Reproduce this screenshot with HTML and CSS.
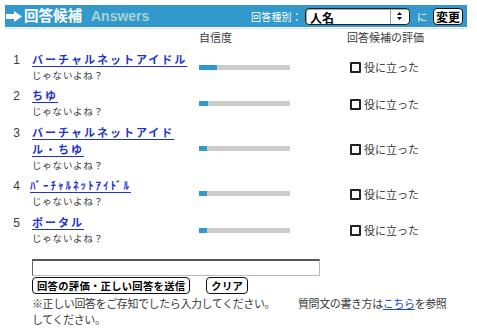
FILE: index.html
```html
<!DOCTYPE html>
<html lang="ja">
<head>
  <meta charset="UTF-8">
  <link rel="stylesheet" href="styles.css">
</head>
<body>
  <div class="titlebar">
    <svg class="arrow" width="16" height="11" viewBox="0 0 16 11">
      <path d="M0 3h8V0l8 5.5L8 11V8H0z" fill="#fff"/>
    </svg>
    <span class="title">回答候補</span>
    <span class="title-en">Answers</span>
    <form class="kind">
      <label for="kind">回答種別：</label>
      <span class="select-wrap">
        <select id="kind"><option>人名</option><option>地名</option></select>
        <span class="select-arrows">
          <svg width="5" height="8" viewBox="0 0 5 8"><path d="M2.5 0L5 3H0zM2.5 8L0 5h5z" fill="#000"/></svg>
        </span>
      </span>
      <span class="ni">に</span>
      <button type="button" class="btn btn-change">変更</button>
    </form>
  </div>
  <div class="rule"></div>

  <table class="answers">
    <colgroup>
      <col class="col-num">
      <col class="col-ans">
      <col class="col-conf">
      <col>
    </colgroup>
    <thead>
      <tr><th></th><th></th><th>自信度</th><th>回答候補の評価</th></tr>
    </thead>
    <tbody>
      <tr>
        <td class="num">1</td>
        <td><div class="name"><a href="#">バーチャルネットアイドル</a></div><div class="sub">じゃないよね？</div></td>
        <td><div class="bar"><div class="fill" style="width:18px"></div></div></td>
        <td class="eval"><label><input type="checkbox" class="useful">役に立った</label></td>
      </tr>
      <tr>
        <td class="num">2</td>
        <td><div class="name"><a href="#">ちゆ</a></div><div class="sub">じゃないよね？</div></td>
        <td><div class="bar"><div class="fill" style="width:9px"></div></div></td>
        <td class="eval"><label><input type="checkbox" class="useful">役に立った</label></td>
      </tr>
      <tr>
        <td class="num">3</td>
        <td><div class="name"><a href="#">バーチャルネットアイドル・ちゆ</a></div><div class="sub">じゃないよね？</div></td>
        <td><div class="bar"><div class="fill" style="width:8px"></div></div></td>
        <td class="eval"><label><input type="checkbox" class="useful">役に立った</label></td>
      </tr>
      <tr>
        <td class="num">4</td>
        <td><div class="name name-half"><a href="#">ﾊﾞｰﾁｬﾙﾈｯﾄｱｲﾄﾞﾙ</a></div><div class="sub">じゃないよね？</div></td>
        <td><div class="bar"><div class="fill" style="width:8px"></div></div></td>
        <td class="eval"><label><input type="checkbox" class="useful">役に立った</label></td>
      </tr>
      <tr>
        <td class="num">5</td>
        <td><div class="name"><a href="#">ポータル</a></div><div class="sub">じゃないよね？</div></td>
        <td><div class="bar"><div class="fill" style="width:8px"></div></div></td>
        <td class="eval"><label><input type="checkbox" class="useful">役に立った</label></td>
      </tr>
    </tbody>
  </table>

  <form class="reply">
    <input type="text" class="reply-input">
    <div class="reply-buttons">
      <button type="button" class="btn">回答の評価・正しい回答を送信</button>
      <button type="button" class="btn">クリア</button>
    </div>
    <div class="notes">
      <p class="note-left">※正しい回答をご存知でしたら入力してください。<br>してください。</p>
      <p class="note-right">質問文の書き方は<a href="#">こちら</a>を参照</p>
    </div>
  </form>
</body>
</html>
```

FILE: styles.css
```css
body {
  margin: 5px 10px 0 5px;
  font-family: "Liberation Sans", "Noto Sans CJK JP", sans-serif;
  font-size: 11px;
  color: #3a3a3a;
  background: #fff;
}

/* title bar */

.titlebar {
  display: flex;
  align-items: center;
  height: 22px;
  background: #3399cc;
  color: #fff;
}

.arrow {
  margin: 0 2px 0 1px;
}

.title {
  font-size: 14.5px;
  font-weight: bold;
  line-height: 22px;
}

.title-en {
  margin-left: 9px;
  font-size: 14px;
  font-weight: bold;
  color: #a3d4d0;
}

.kind {
  display: flex;
  align-items: center;
  margin: 0 4px 0 auto;
}

.kind label {
  font-size: 10px;
  letter-spacing: 0.2px;
  margin-right: 3px;
}

.select-wrap {
  display: inline-flex;
  width: 105px;
  height: 17px;
  box-sizing: border-box;
  border: 1px solid #222;
  border-radius: 4px;
  background: #fff;
  box-shadow: inset 1px 1px 0 #aaa;
  overflow: hidden;
}

.select-wrap select {
  -webkit-appearance: none;
  appearance: none;
  flex: 1;
  min-width: 0;
  height: 15px;
  border: 0;
  padding: 0 0 0 4px;
  background: transparent;
  color: #000;
  font: bold 12px "Noto Sans CJK JP", sans-serif;
  outline: none;
}

.select-arrows {
  display: flex;
  align-items: center;
  justify-content: center;
  width: 18px;
  border-left: 1px solid #999;
}

.ni {
  margin: 0 6px 0 7px;
  font-size: 10px;
}

.btn {
  background: #fff;
  border: 1px solid #111;
  border-radius: 4px;
  color: #000;
  font-family: "Noto Sans CJK JP", sans-serif;
  font-weight: bold;
  padding: 0 4px;
}

.btn-change {
  height: 17px;
  font-size: 12px;
  line-height: 15px;
  padding: 0 2px;
}

.rule {
  height: 1px;
  margin-top: 1px;
  background: #e2e2e2;
}

/* answers */

.answers {
  width: 462px;
  table-layout: fixed;
  border-collapse: collapse;
}

.col-num {
  width: 27px;
}

.col-ans {
  width: 167px;
}

.col-conf {
  width: 148px;
}

.answers th {
  padding: 1px 0 3px;
  font-size: 11px;
  font-weight: normal;
  line-height: 16px;
  text-align: left;
}

.answers td {
  padding: 2.75px 0;
  vertical-align: middle;
}

.answers td.num {
  vertical-align: top;
  text-align: right;
  padding-right: 12px;
  font-size: 12px;
  line-height: 17px;
}

.name {
  line-height: 17px;
}

.name a {
  color: #2233cc;
  font-size: 11px;
  font-weight: bold;
  letter-spacing: 2px;
  text-underline-offset: 2px;
}

.name-half {
  margin-left: -2px;
}

.sub {
  font-size: 9.5px;
  letter-spacing: 0.8px;
  line-height: 14px;
}

.bar {
  width: 91px;
  height: 5px;
  background: #cccccc;
}

.fill {
  height: 5px;
  background: #3399cc;
}

.answers td.eval {
  padding-left: 3px;
  font-size: 11px;
}

.useful {
  -webkit-appearance: none;
  appearance: none;
  width: 11px;
  height: 11px;
  box-sizing: border-box;
  margin: 0 3px 0 0;
  border: 2px solid #222;
  border-radius: 1px;
  background: #fff;
  vertical-align: -1px;
}

/* reply form */

.reply {
  margin: 10px 0 0 27px;
}

.reply-input {
  display: block;
  width: 288px;
  height: 17px;
  box-sizing: border-box;
  margin: 0;
  border: 1px solid #bbb;
  border-top: 2px solid #555;
  border-left-color: #666;
}

.reply-buttons {
  display: flex;
  gap: 16px;
  margin-top: 1px;
}

.reply-buttons .btn {
  height: 17px;
  font-size: 10.3px;
  letter-spacing: 0.3px;
  line-height: 15px;
}

.notes {
  display: flex;
  padding-top: 2px;
  font-size: 11px;
  letter-spacing: -0.4px;
  line-height: 16px;
}

.notes p {
  margin: 0;
}

.note-left {
  width: 266px;
}

.note-right a {
  color: #2244cc;
}
```
